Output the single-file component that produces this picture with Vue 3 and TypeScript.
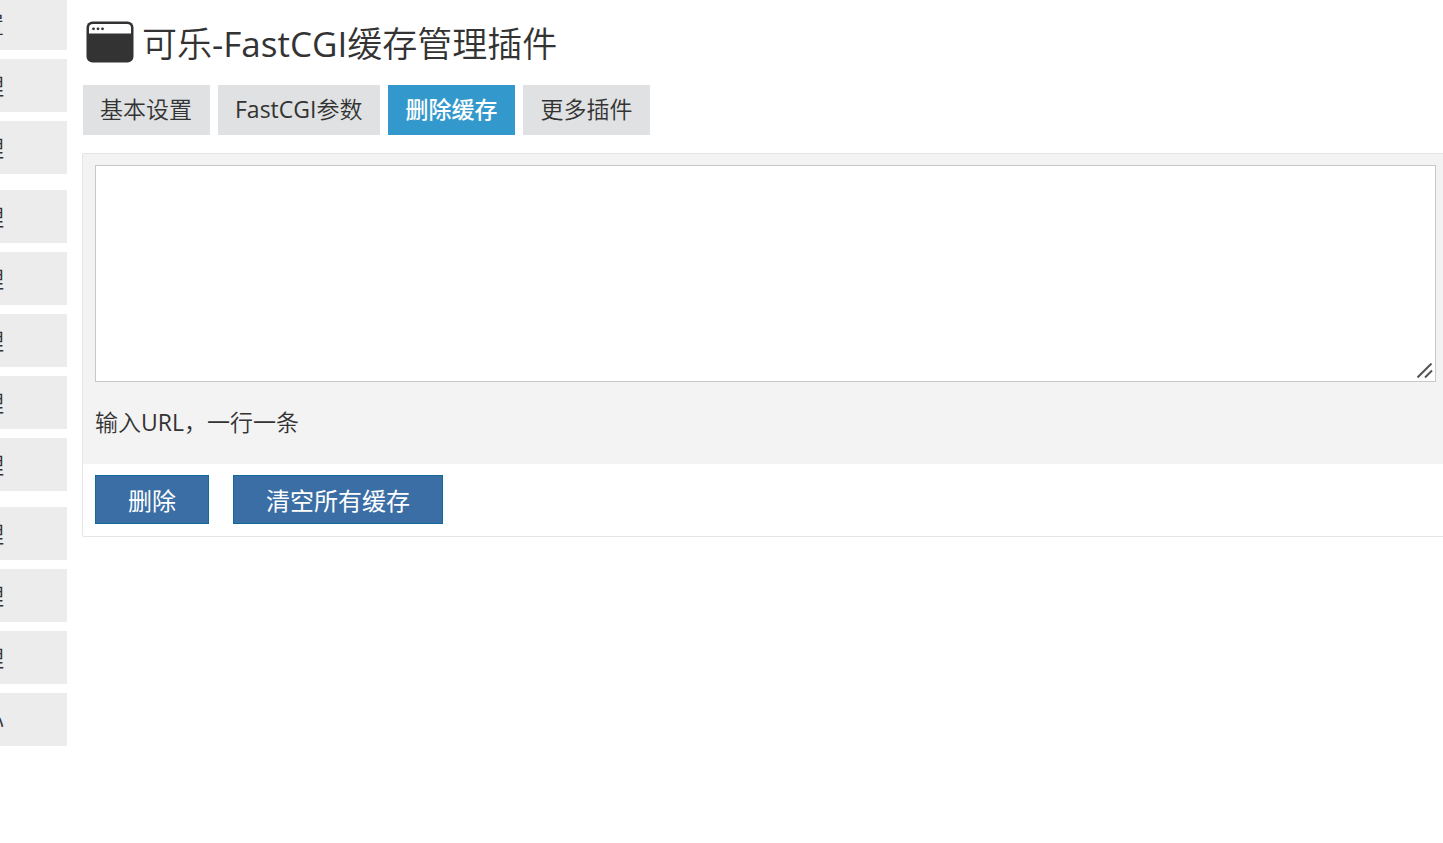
<script setup lang="ts">
import { ref } from 'vue'

const menuGroups: string[][] = [
  ['置', '理', '理'],
  ['理', '理', '理', '理', '理'],
  ['理', '理', '理', '心'],
]

const tabs: string[] = ['基本设置', 'FastCGI参数', '删除缓存', '更多插件']
const activeTab = ref<string>('删除缓存')
const urls = ref<string>('')

function clearUrls(): void {
  urls.value = ''
}
</script>

<template>
  <div class="page">
    <nav class="sidebar">
      <div v-for="(group, g) in menuGroups" :key="g" class="menu-group">
        <a v-for="(label, i) in group" :key="i" href="#" class="menu-item">{{ label }}</a>
      </div>
    </nav>

    <main class="main">
      <h1 class="title">
        <svg class="title-icon" viewBox="0 0 48 42" aria-hidden="true">
          <rect x="0.5" y="0.5" width="47" height="41" rx="6" fill="#333" />
          <path d="M3 12.500V7a4 4 0 0 1 4-4H41a4 4 0 0 1 4 4V12.500Z" fill="#fff" />
          <circle cx="7.5" cy="7.8" r="1.4" fill="#333" />
          <circle cx="12" cy="7.8" r="1.4" fill="#333" />
          <circle cx="16.5" cy="7.8" r="1.4" fill="#333" />
        </svg>
        <span class="title-text">可乐-FastCGI缓存管理插件</span>
      </h1>

      <div class="tabs">
        <a
          v-for="tab in tabs"
          :key="tab"
          href="#"
          class="tab"
          :class="{ active: tab === activeTab }"
          @click.prevent="activeTab = tab"
        >{{ tab }}</a>
      </div>

      <form class="panel" @submit.prevent="clearUrls">
        <div class="fields">
          <div class="area-wrap">
            <textarea id="urls" v-model="urls" class="area"></textarea>
            <svg class="grip" viewBox="0 0 16 16" aria-hidden="true">
              <path d="M0.5 14.5L14.5 0.5M8 14.5L15 7.5" stroke="#555" stroke-width="2" />
            </svg>
          </div>
          <label for="urls" class="hint">输入URL，一行一条</label>
        </div>
        <div class="actions">
          <button type="submit" class="button">删除</button>
          <button type="button" class="button" @click="clearUrls">清空所有缓存</button>
        </div>
      </form>
    </main>
  </div>
</template>

<style>
body {
  margin: 0;
  background: #fff;
}
</style>

<style scoped>
.page {
  display: flex;
  min-height: 100vh;
  overflow: hidden;
  color: #333;
  font-family: "Open Sans", "Noto Sans CJK SC DemiLight", "Noto Sans CJK SC", sans-serif;
  font-size: 23px;
  font-weight: 380;
}

.sidebar {
  display: flex;
  flex: 0 0 67px;
  flex-direction: column;
  gap: 16px;
  min-width: 0;
  margin-top: -3px;
}

.menu-group {
  display: flex;
  flex-direction: column;
  gap: 9px;
}

.menu-item {
  display: flex;
  align-items: center;
  justify-content: flex-end;
  box-sizing: border-box;
  width: 67px;
  height: 53px;
  padding: 0 63px 2px 0;
  background: #ececec;
  color: #333;
  text-decoration: none;
}

.main {
  flex: 1;
  min-width: 0;
  padding: 15px 0 0 15px;
}

.title {
  display: flex;
  align-items: center;
  gap: 8px;
  margin: 0;
  padding-left: 4px;
  font-family: "Open Sans", "Noto Sans CJK SC DemiLight", "Noto Sans CJK SC", sans-serif;
  font-size: 35px;
  font-weight: 380;
  line-height: 50px;
}

.title-text {
  padding-top: 4px;
}

.title-icon {
  width: 48px;
  height: 42px;
}

.tabs {
  display: flex;
  gap: 8px;
  margin: 16px 0 18px;
  padding-left: 1px;
}

.tab {
  padding: 0 18px 2px 17px;
  background: #dfe1e2;
  color: #333;
  line-height: 48px;
  text-decoration: none;
  white-space: nowrap;
}

.tab.active {
  background: #3399cc;
  color: #fff;
  font-family: "Open Sans", "Noto Sans CJK SC", sans-serif;
  font-weight: 500;
}

.panel {
  border: solid #e5e5e5;
  border-width: 1px 0 1px 1px;
  border-radius: 2px 0 0 2px;
}

.fields {
  padding: 11px 7px 25px 12px;
  background: #f3f3f3;
}

.area-wrap {
  position: relative;
  display: flex;
}

.area {
  flex: 1;
  box-sizing: border-box;
  height: 217px;
  padding: 6px;
  border: 1px solid #c8c8c8;
  border-radius: 0;
  outline: none;
  background: #fff;
  color: #333;
  font: inherit;
  resize: none;
}

.grip {
  position: absolute;
  right: 3px;
  bottom: 3px;
  width: 16px;
  height: 16px;
  pointer-events: none;
}

.hint {
  display: block;
  margin-top: 23px;
  line-height: 34px;
}

.actions {
  display: flex;
  gap: 24px;
  padding: 11px 12px 12px;
}

.button {
  height: 49px;
  padding: 0 32px;
  border: 1px solid #106a9c;
  border-radius: 0;
  background: #3b6ea5;
  color: #fff;
  font-family: "Open Sans", "Noto Sans CJK SC", sans-serif;
  font-size: 24px;
  font-weight: 400;
}
</style>
